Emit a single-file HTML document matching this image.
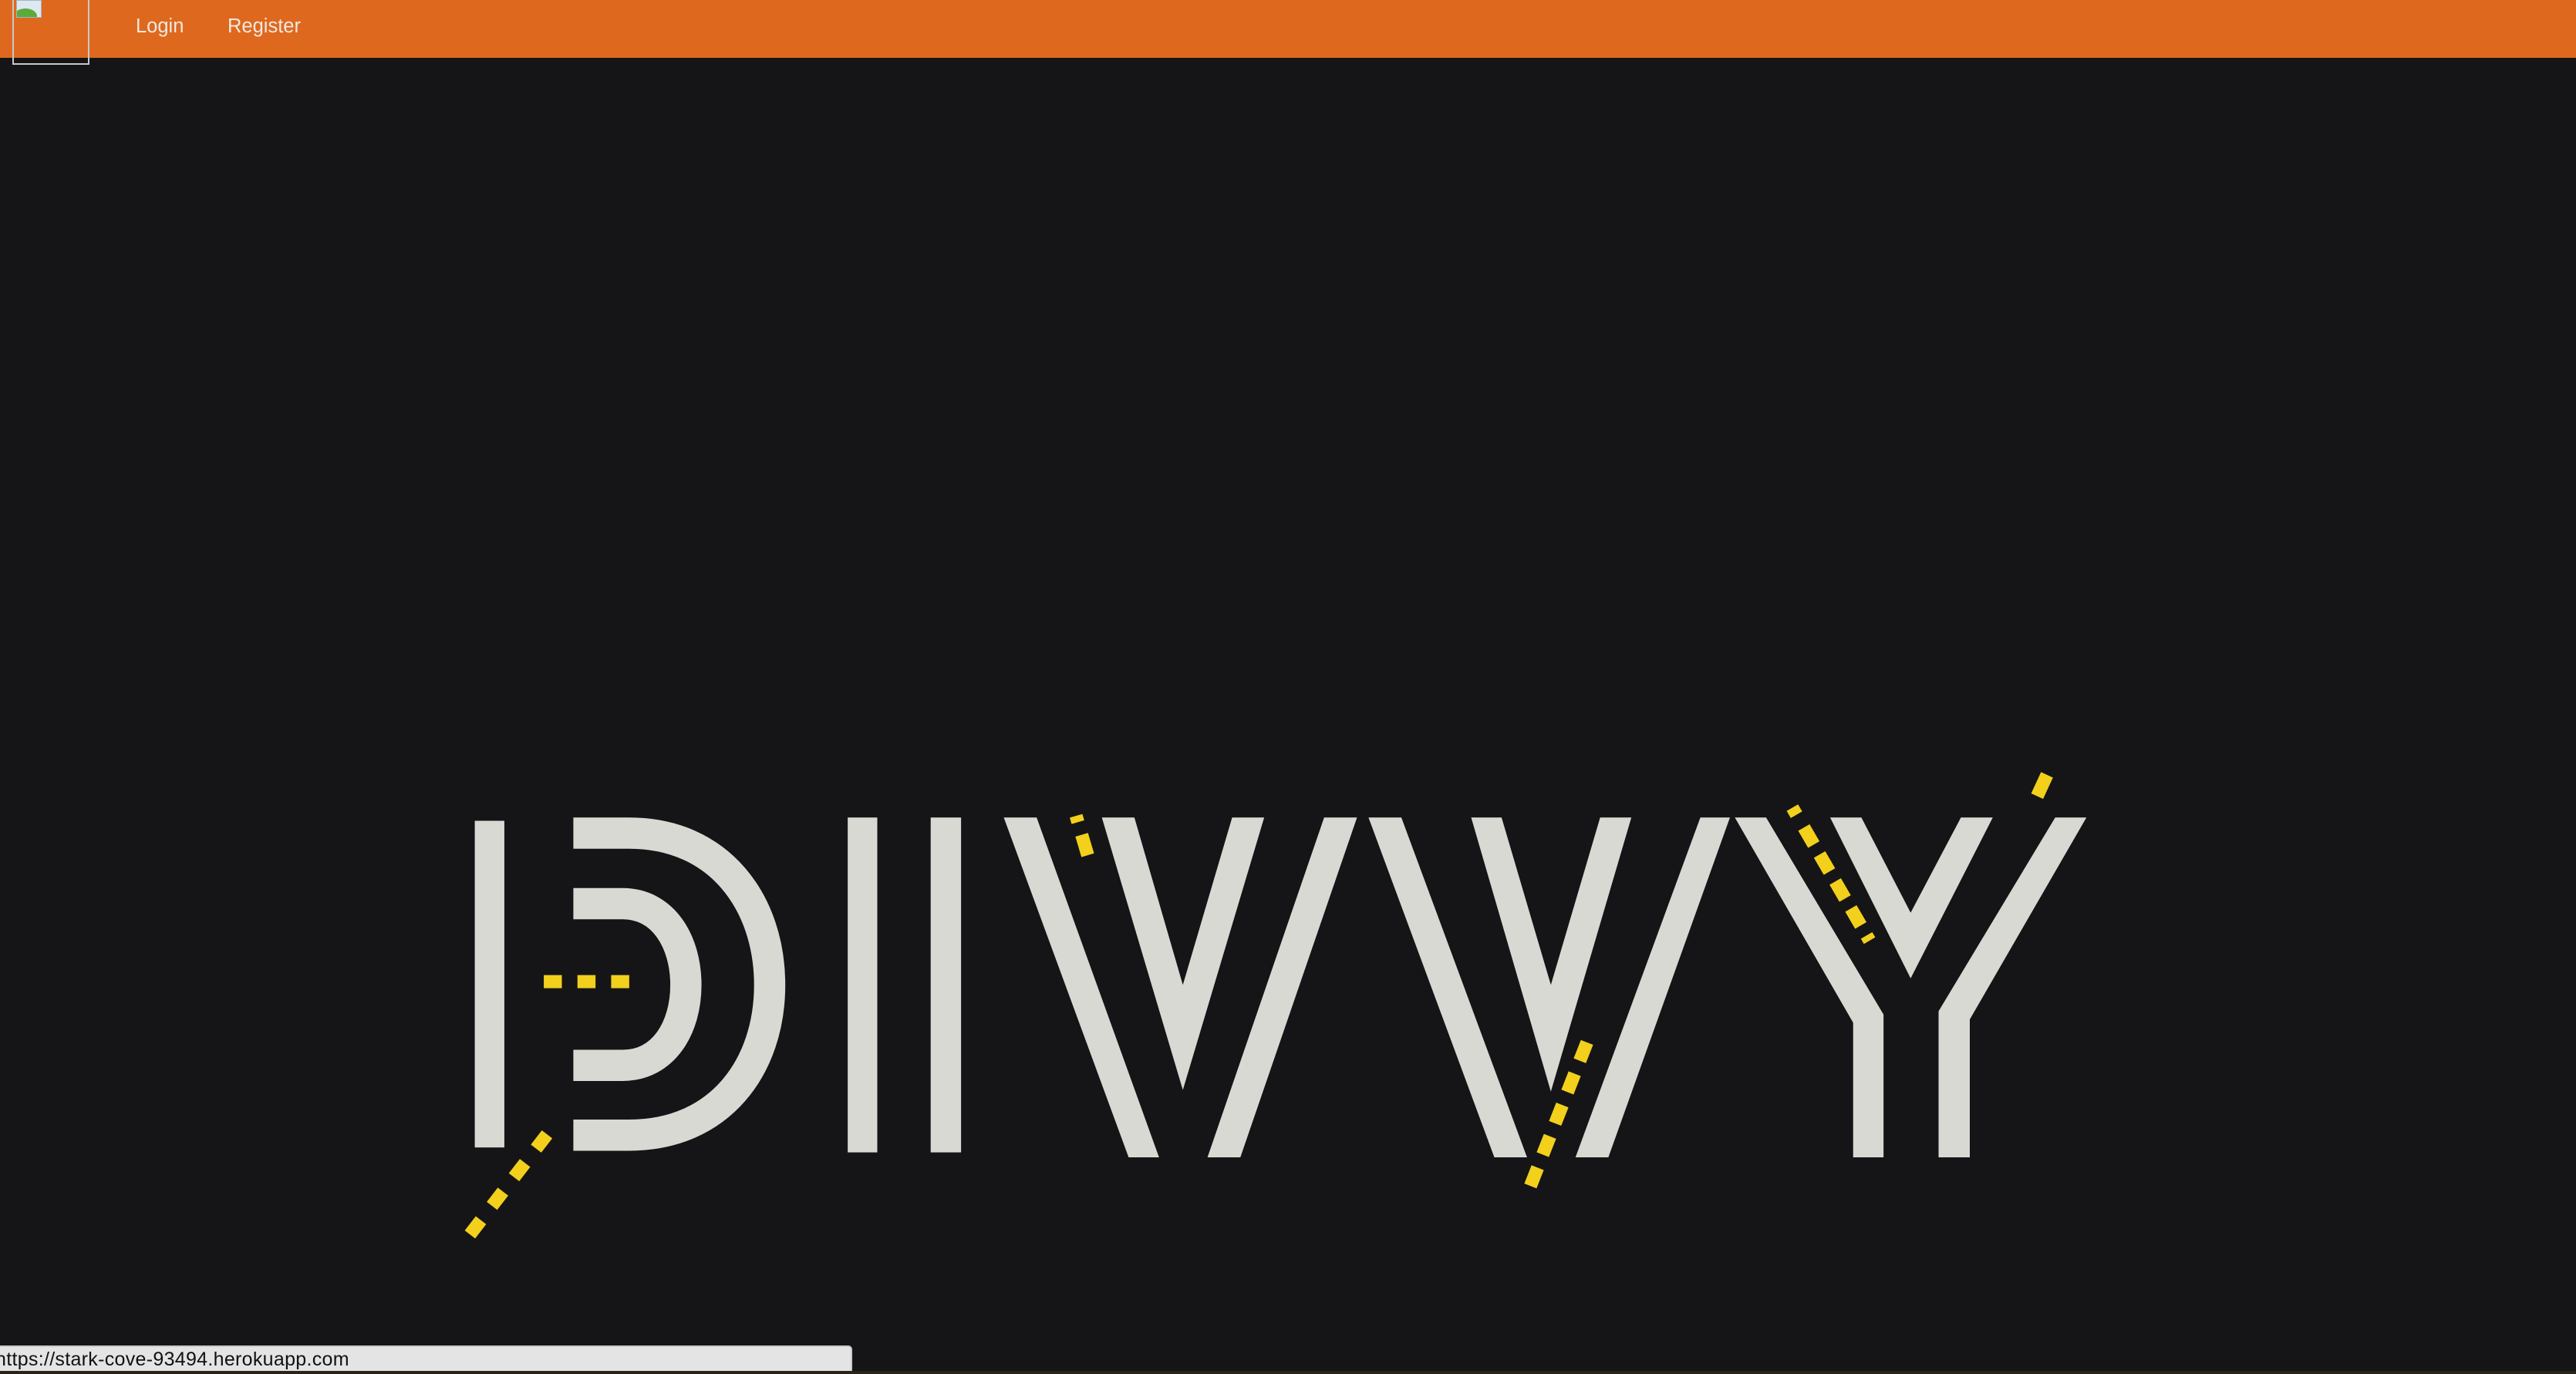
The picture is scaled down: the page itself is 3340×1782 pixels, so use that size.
<!DOCTYPE html>
<html>
<head>
<meta charset="utf-8">
<style>
html,body{margin:0;padding:0;width:3340px;height:1782px;overflow:hidden;background:#151517;font-family:"Liberation Sans",Arial,sans-serif;}
.nav{position:absolute;left:0;top:0;width:3340px;height:75px;background:#de691e;}
.imgbox{position:absolute;left:16px;top:0;width:96px;height:82px;border:2px solid #c8c8c8;border-top:none;}
.bi{position:absolute;left:21px;top:0;width:31px;height:21px;background:#dfe8f2;border:1px solid #9bb;overflow:hidden;}
.bi:after{content:"";position:absolute;left:-4px;top:10px;width:30px;height:20px;border-radius:50%;background:#5aab3c;}
.nav a{position:absolute;top:20px;font-size:25.5px;color:#f3e8e2;text-decoration:none;}
svg{position:absolute;left:0;top:0;}
.status{position:absolute;left:0;top:1745px;width:1103px;height:32px;background:#e4e4e4;border-top:2px solid #c9c9c9;border-right:2px solid #c9c9c9;border-top-right-radius:5px;font-size:25px;line-height:32px;color:#111;text-indent:-6px;letter-spacing:0.3px;}
.strip{position:absolute;left:0;top:1778px;width:3340px;height:4px;background:#2a2418;}
</style>
</head>
<body>
<div class="nav">
  <div class="imgbox"></div>
  <div class="bi"></div>
  <a style="left:176px">Login</a>
  <a style="left:295px">Register</a>
</div>
<svg width="3340" height="1782" viewBox="0 0 1568 837" preserveAspectRatio="none">
  <g fill="#d9d9d4" stroke="none">
    <rect x="289" y="500" width="18" height="199"/>
    <rect x="516" y="498" width="18" height="204"/>
    <rect x="566.5" y="498" width="18.5" height="204"/>
    <polygon points="611,498 631,498 705.5,705 687,705"/>
    <polygon points="806,498 826,498 755,705 735,705"/>
    <polygon points="670.7,498 690.5,498 720,600 750,498 769.5,498 720,664"/>
    <polygon points="833,498 853,498 929.5,705 909.6,705"/>
    <polygon points="1035,498 1053,498 979,705 959,705"/>
    <polygon points="895.5,498 914,498 944,600 974,498 993,498 944,665"/>
    <polygon points="1056,498 1075,498 1146.5,618 1146.5,705 1128,705 1128,623"/>
    <polygon points="1251,498 1270,498 1199,621 1199,705 1180,705 1180,616"/>
    <polygon points="1114,498 1133,498 1163,556 1193.6,498 1213,498 1163,596"/>
  </g>
  <g fill="none" stroke="#d9d9d4" stroke-width="19">
    <path d="M349 507.5 H383 C438 507.5 468.5 550 468.5 600 C468.5 650 438 691.5 383 691.5 H349"/>
    <path d="M349 550.5 H379 C404 550.5 417.5 574 417.5 600 C417.5 626 404 649 379 649 H349"/>
  </g>
  <g fill="none" stroke="#f2d01c" stroke-width="8">
    <line x1="331" y1="598" x2="384" y2="598" stroke-dasharray="11 9.5"/>
    <line x1="333" y1="691" x2="283" y2="756" stroke-dasharray="11 11"/>
    <line x1="966" y1="635" x2="929" y2="729" stroke-dasharray="12 8.5"/>
    <line x1="1091" y1="492" x2="1138" y2="573" stroke-dasharray="5 9 12 7 12 7 12 7 12 7"/>
    <line x1="655" y1="497" x2="663" y2="524" stroke-dasharray="4 8 13"/>
    <line x1="1246" y1="472" x2="1240" y2="485"/>
  </g>
</svg>
<div class="status">https://stark-cove-93494.herokuapp.com</div>
<div class="strip"></div>
</body>
</html>
